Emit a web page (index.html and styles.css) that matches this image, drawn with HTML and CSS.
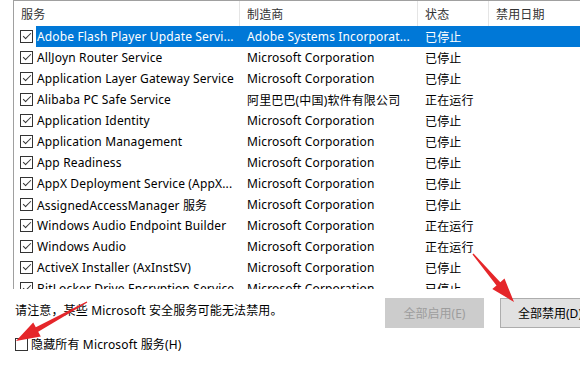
FILE: index.html
```html
<!DOCTYPE html>
<html lang="zh-CN">
<head>
    <meta charset="UTF-8">
    <title>服务</title>
    <link rel="stylesheet" href="styles.css">
</head>
<body>
    <div class="list">
        <div class="row head">
            <div class="cell c1">服务</div>
            <div class="cell c2">制造商</div>
            <div class="cell c3">状态</div>
            <div class="cell c4">禁用日期</div>
        </div>
        <div class="row selected">
            <div class="cell c1"><span class="cb"></span><span class="name">Adobe Flash Player Update Servi...</span></div>
            <div class="cell c2">Adobe Systems Incorporat...</div>
            <div class="cell c3">已停止</div>
            <div class="cell c4"></div>
        </div>
        <div class="row">
            <div class="cell c1"><span class="cb"></span><span class="name">AllJoyn Router Service</span></div>
            <div class="cell c2">Microsoft Corporation</div>
            <div class="cell c3">已停止</div>
            <div class="cell c4"></div>
        </div>
        <div class="row">
            <div class="cell c1"><span class="cb"></span><span class="name">Application Layer Gateway Service</span></div>
            <div class="cell c2">Microsoft Corporation</div>
            <div class="cell c3">已停止</div>
            <div class="cell c4"></div>
        </div>
        <div class="row">
            <div class="cell c1"><span class="cb"></span><span class="name">Alibaba PC Safe Service</span></div>
            <div class="cell c2">阿里巴巴(中国)软件有限公司</div>
            <div class="cell c3">正在运行</div>
            <div class="cell c4"></div>
        </div>
        <div class="row">
            <div class="cell c1"><span class="cb"></span><span class="name">Application Identity</span></div>
            <div class="cell c2">Microsoft Corporation</div>
            <div class="cell c3">已停止</div>
            <div class="cell c4"></div>
        </div>
        <div class="row">
            <div class="cell c1"><span class="cb"></span><span class="name">Application Management</span></div>
            <div class="cell c2">Microsoft Corporation</div>
            <div class="cell c3">已停止</div>
            <div class="cell c4"></div>
        </div>
        <div class="row">
            <div class="cell c1"><span class="cb"></span><span class="name">App Readiness</span></div>
            <div class="cell c2">Microsoft Corporation</div>
            <div class="cell c3">已停止</div>
            <div class="cell c4"></div>
        </div>
        <div class="row">
            <div class="cell c1"><span class="cb"></span><span class="name">AppX Deployment Service (AppX...</span></div>
            <div class="cell c2">Microsoft Corporation</div>
            <div class="cell c3">已停止</div>
            <div class="cell c4"></div>
        </div>
        <div class="row">
            <div class="cell c1"><span class="cb"></span><span class="name">AssignedAccessManager 服务</span></div>
            <div class="cell c2">Microsoft Corporation</div>
            <div class="cell c3">已停止</div>
            <div class="cell c4"></div>
        </div>
        <div class="row">
            <div class="cell c1"><span class="cb"></span><span class="name">Windows Audio Endpoint Builder</span></div>
            <div class="cell c2">Microsoft Corporation</div>
            <div class="cell c3">正在运行</div>
            <div class="cell c4"></div>
        </div>
        <div class="row">
            <div class="cell c1"><span class="cb"></span><span class="name">Windows Audio</span></div>
            <div class="cell c2">Microsoft Corporation</div>
            <div class="cell c3">正在运行</div>
            <div class="cell c4"></div>
        </div>
        <div class="row">
            <div class="cell c1"><span class="cb"></span><span class="name">ActiveX Installer (AxInstSV)</span></div>
            <div class="cell c2">Microsoft Corporation</div>
            <div class="cell c3">已停止</div>
            <div class="cell c4"></div>
        </div>
        <div class="row">
            <div class="cell c1"><span class="cb"></span><span class="name">BitLocker Drive Encryption Service</span></div>
            <div class="cell c2">Microsoft Corporation</div>
            <div class="cell c3">已停止</div>
            <div class="cell c4"></div>
        </div>
    </div>

    <div class="footer">
        <p class="note">请注意，某些 Microsoft 安全服务可能无法禁用。</p>
        <button class="btn" disabled>全部启用(E)</button>
        <button class="btn active">全部禁用(D)</button>
    </div>

    <label class="hide-ms"><span class="cb empty"></span>隐藏所有 Microsoft 服务(H)</label>

    <!-- red annotation arrows -->
    <svg class="arrows" width="580" height="367" viewBox="0 0 580 367">
        <polygon points="86.7,301.4 35.8,327.3 33.2,322.5 16,341 40.8,336.5 38.2,331.7 87.3,302.6" />
        <polygon points="473.5,253.5 500.3,282.2 504.5,278.6 514,302 492.3,289 496.5,285.4 472.5,254.5" />
    </svg>
</body>
</html>
```

FILE: styles.css
```css
body {
    margin: 0;
    width: 580px;
    height: 367px;
    overflow: hidden;
    position: relative;
    background: #fff;
    color: #000;
    font-family: "Noto Sans", "Noto Sans CJK SC", sans-serif;
    font-size: 12px;
    letter-spacing: 0.15px;
}
.list {
    margin-left: 13px;
    width: 620px;
    height: 289px;
    border-top: 1px solid #a0a0a0;
    border-left: 1px solid #a0a0a0;
    overflow: hidden;
    box-sizing: border-box;
}
.row {
    display: flex;
    height: 21px;
    align-items: center;
    white-space: nowrap;
}
.row.head {
    height: 25px;
    color: #333;
}
.cell {
    overflow: hidden;
    height: 100%;
    display: flex;
    align-items: center;
    box-sizing: border-box;
    padding-left: 7px;
}
.c1 { width: 226px; padding-left: 6px; }
.c2 { width: 178px; padding-left: 7px; }
.c3 { width: 71px; }
.c4 { flex: 1; }
.head .cell { border-right: 1px solid #e5e5e5; }
.head .c1 { padding-left: 7px; }
.cb {
    position: relative;
    flex: none;
    width: 13px;
    height: 13px;
    border: 1px solid #333;
    box-sizing: border-box;
    background: #fff;
    margin-right: 3px;
}
.cb::after {
    content: "";
    position: absolute;
    left: 2px;
    top: 2px;
    width: 7px;
    height: 3px;
    border-left: 1px solid #333;
    border-bottom: 1px solid #333;
    transform: rotate(-45deg);
}
.cb.empty::after { display: none; }
.name {
    height: 100%;
    display: flex;
    align-items: center;
    padding: 0 1px;
    flex: 1;
}
.selected { background: #0078d7; color: #fff; }
.selected .c1 { background: #fff; }
.selected .name { background: #0078d7; }
.footer {
    display: flex;
    align-items: flex-start;
    padding-left: 15px;
    margin-top: 9px;
    width: 620px;
}
.note {
    margin: 3px 0 0;
    width: 370px;
    flex: none;
}
.btn {
    flex: none;
    height: 30px;
    width: 99px;
    font: inherit;
    border: 1px solid #ccc;
    background: #ccc;
    color: #9d9d9d;
    padding: 0;
}
.btn.active {
    margin-left: 16px;
    width: 100px;
    background: #e1e1e1;
    border-color: #adadad;
    color: #000;
}
.hide-ms {
    display: flex;
    align-items: center;
    margin: 7px 0 0 15px;
}
.hide-ms .cb { margin-right: 3px; }
.arrows {
    position: absolute;
    left: 0;
    top: 0;
    fill: #e5262a;
}
```
